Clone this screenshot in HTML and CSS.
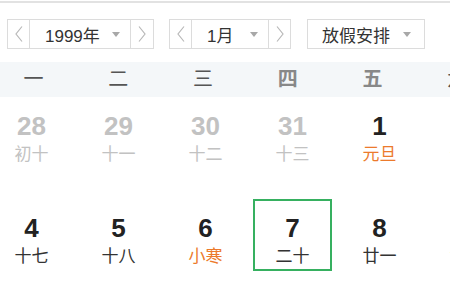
FILE: index.html
```html
<!DOCTYPE html>
<html lang="zh">
<head>
<meta charset="utf-8">
<link rel="stylesheet" href="styles.css">
</head>
<body>
<div class="page">
  <div class="topline"></div>
  <div class="toolbar">
    <div class="box year">
      <div class="arrow"><svg width="8" height="16" viewBox="0 0 8 16"><polyline points="7,0.5 1,8 7,15.5" fill="none" stroke="#b8b8b8" stroke-width="1.2"/></svg></div>
      <div class="select"><span>1999年</span><i class="tri"></i></div>
      <div class="arrow wide"><svg width="8" height="16" viewBox="0 0 8 16"><polyline points="1,0.5 7,8 1,15.5" fill="none" stroke="#b8b8b8" stroke-width="1.2"/></svg></div>
    </div>
    <div class="box month">
      <div class="arrow"><svg width="8" height="16" viewBox="0 0 8 16"><polyline points="7,0.5 1,8 7,15.5" fill="none" stroke="#b8b8b8" stroke-width="1.2"/></svg></div>
      <div class="select"><span>1月</span><i class="tri"></i></div>
      <div class="arrow"><svg width="8" height="16" viewBox="0 0 8 16"><polyline points="1,0.5 7,8 1,15.5" fill="none" stroke="#b8b8b8" stroke-width="1.2"/></svg></div>
    </div>
    <div class="box holiday">
      <div class="select"><span>放假安排</span><i class="tri"></i></div>
    </div>
  </div>
  <div class="weekbar">
    <div class="weekrow">
      <div class="wk">一</div>
      <div class="wk">二</div>
      <div class="wk">三</div>
      <div class="wk strong">四</div>
      <div class="wk strong">五</div>
      <div class="wk">六</div>
      <div class="wk">日</div>
    </div>
  </div>
  <div class="days">
    <div class="day other"><div class="num">28</div><div class="lunar">初十</div></div>
    <div class="day other"><div class="num">29</div><div class="lunar">十一</div></div>
    <div class="day other"><div class="num">30</div><div class="lunar">十二</div></div>
    <div class="day other"><div class="num">31</div><div class="lunar">十三</div></div>
    <div class="day"><div class="num">1</div><div class="lunar fest">元旦</div></div>
    <div class="day"><div class="num">2</div><div class="lunar">十五</div></div>
    <div class="day"><div class="num">3</div><div class="lunar">十六</div></div>
    <div class="day"><div class="num">4</div><div class="lunar">十七</div></div>
    <div class="day"><div class="num">5</div><div class="lunar">十八</div></div>
    <div class="day"><div class="num">6</div><div class="lunar fest">小寒</div></div>
    <div class="day selected"><div class="num">7</div><div class="lunar">二十</div></div>
    <div class="day"><div class="num">8</div><div class="lunar">廿一</div></div>
    <div class="day"><div class="num">9</div><div class="lunar">廿二</div></div>
    <div class="day"><div class="num">10</div><div class="lunar">廿三</div></div>
  </div>
</div>
</body>
</html>
```

FILE: styles.css
```css
html, body {
  margin: 0;
  padding: 0;
  background: #fff;
}
body {
  font-family: "Liberation Sans", "Noto Sans CJK SC", sans-serif;
  color: #333;
  overflow: hidden;
  width: 450px;
  height: 300px;
}
.page {
  width: 450px;
  height: 300px;
  overflow: hidden;
}
.topline {
  margin-top: 1px;
  height: 2px;
  background: #e2e2e2;
}
.toolbar {
  display: flex;
  padding-left: 7px;
  margin-top: 16px;
  height: 30px;
}
.box {
  display: flex;
  height: 28px;
  border: 1px solid #dcdcdc;
}
.year { margin-right: 15px; }
.month { margin-right: 16px; }
.arrow {
  width: 21px;
  display: flex;
  align-items: center;
  justify-content: center;
}
.arrow.wide { width: 22px; }
.select {
  display: flex;
  align-items: center;
  justify-content: space-between;
  padding: 0 10px 0 15px;
  border-left: 1px solid #dcdcdc;
  border-right: 1px solid #dcdcdc;
  font-size: 17px;
  color: #333;
}
.year .select { width: 75px; }
.month .select { width: 51px; }
.holiday .select {
  border: none;
  width: 89px;
  padding: 0 13px 0 14px;
}
.tri {
  display: block;
  width: 0;
  height: 0;
  border-left: 4px solid transparent;
  border-right: 4px solid transparent;
  border-top: 5px solid #a8a8a8;
}
.weekbar {
  margin-top: 13px;
  height: 35px;
  background: #f4f7f9;
}
.weekrow {
  display: grid;
  grid-template-columns: repeat(7, 84.75px);
  margin-left: -9px;
  height: 35px;
  align-items: center;
}
.wk {
  text-align: center;
  font-size: 20px;
  line-height: 35px;
  color: #555;
}
.wk.strong {
  font-weight: bold;
  color: #888;
}
.days {
  display: grid;
  grid-template-columns: repeat(7, 79px);
  grid-auto-rows: 72px;
  column-gap: 8px;
  row-gap: 30px;
  margin-left: -8px;
}
.day {
  box-sizing: border-box;
  display: flex;
  flex-direction: column;
  align-items: center;
  padding-top: 12px;
  border: 2px solid transparent;
}
.day.selected {
  border-color: #36b060;
}
.num {
  font-size: 26px;
  line-height: 30px;
  font-weight: bold;
  color: #222;
}
.lunar {
  font-size: 17px;
  line-height: 20px;
  margin-top: 2px;
  color: #333;
  font-family: "Noto Sans CJK SC", sans-serif;
}
.lunar.fest { color: #ec7a2c; }
.day.other .num, .day.other .lunar { color: #c2c2c2; }
```
